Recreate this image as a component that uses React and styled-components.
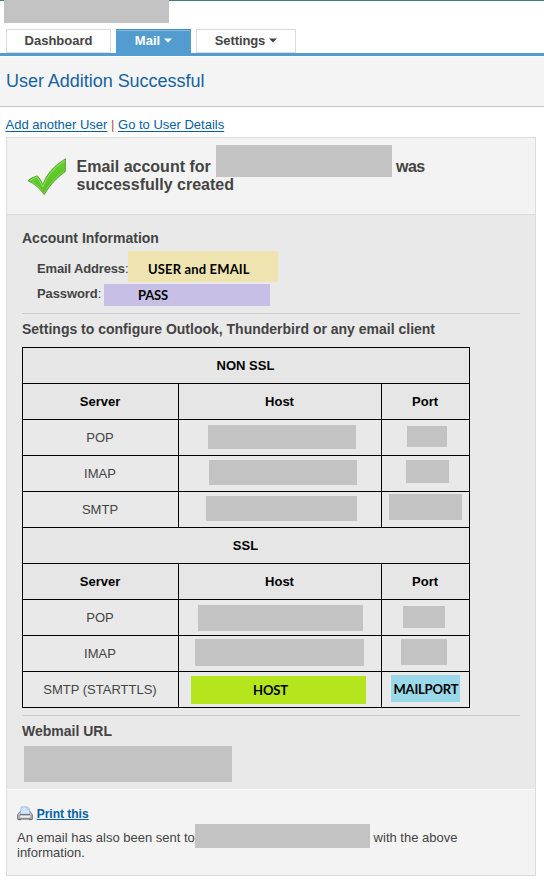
import React from "react";
import styled, { createGlobalStyle } from "styled-components";

const GlobalStyle = createGlobalStyle`
  * { box-sizing: border-box; }
  body {
    margin: 0;
    background: #fff;
    color: #444;
    font: 13px/15px "Liberation Sans", Arial, sans-serif;
  }
`;

const Page = styled.div`
  display: flex;
  flex-direction: column;
  width: 544px;
  height: 881px;
  overflow: hidden;
`;

const TopBar = styled.header`
  height: 29px;
  border-top: 1px solid #3f7d86;
  padding-left: 4px;
`;

const Block = styled.div`
  flex: none;
  width: ${(p) => p.$w}px;
  height: ${(p) => p.$h}px;
  margin: ${(p) => p.$t || 0}px 0 0 ${(p) => p.$l || 0}px;
  background: ${(p) => p.$color || "#c3c3c3"};
`;

const Marker = styled(Block)`
  display: flex;
  align-items: center;
  padding: ${(p) => p.$drop || 0}px 0 0 ${(p) => p.$pad}px;
  color: #000;
  font: bold 13px/16px Lato, Carlito, sans-serif;
  letter-spacing: ${(p) => p.$track || 0}px;
  white-space: nowrap;
`;

const Tabs = styled.nav`
  display: flex;
  gap: 5px;
  height: 27px;
  padding-left: 6px;
  border-bottom: 3px solid #529ccf;
`;

const Tab = styled.a`
  display: flex;
  align-items: center;
  justify-content: center;
  gap: 4px;
  width: ${(p) => p.$w}px;
  height: 24px;
  padding-bottom: 1px;
  border: 1px solid ${(p) => (p.$active ? "#529ccf" : "#dcdcdc")};
  border-top-color: ${(p) => (p.$active ? "#4788b5" : "#dcdcdc")};
  box-shadow: ${(p) => (p.$active ? "inset 0 1px #86bce0" : "none")};
  background: ${(p) => (p.$active ? "#529ccf" : "#fff")};
  color: ${(p) => (p.$active ? "#fff" : "#444")};
  font-weight: bold;
  letter-spacing: ${(p) => p.$track || 0}px;
`;

const TitleBar = styled.div`
  display: flex;
  align-items: center;
  height: 50px;
  margin-top: 1px;
  padding: 0 0 2px 6px;
  border-bottom: 1px solid #c6c6c6;
  background: #f4f4f4;
`;

const Title = styled.h1`
  margin: 0;
  color: #1562a2;
  font-size: 18px;
  font-weight: normal;
  line-height: 20px;
  letter-spacing: -0.03px;
`;

const Links = styled.div`
  height: 30px;
  padding: 10px 0 0 5.5px;
  color: #a55;
`;

const Link = styled.a`
  color: #0560a6;
  font-weight: ${(p) => (p.$bold ? "bold" : "normal")};
  font-size: ${(p) => (p.$bold ? 12 : 13)}px;
  text-decoration: underline;
  text-underline-offset: ${(p) => (p.$bold ? 1 : 2)}px;
`;

const Panel = styled.main`
  display: flex;
  flex-direction: column;
  width: 530px;
  height: 739px;
  margin-left: 6px;
  border: 1px solid #dcdcdc;
  background: #e9e9e9;
`;

const Banner = styled.section`
  display: flex;
  height: 77px;
  padding: 20px 0 0 20px;
  border-bottom: 1px solid #dcdcdc;
  background: #f3f3f3;
`;

const Message = styled.div`
  margin-left: 9.5px;
  font-size: 16px;
  font-weight: bold;
  line-height: 18px;
`;

const Line = styled.div`
  display: flex;
  align-items: flex-start;
  height: ${(p) => p.$h}px;
  white-space: pre;
`;

const Words = styled.span`
  flex: none;
  width: ${(p) => p.$w}px;
  letter-spacing: ${(p) => p.$track || 0}px;
`;

const Body = styled.section`
  height: 574px;
  padding: 15px 15px 0;
`;

const Heading = styled.h2`
  margin: 0;
  font-size: 14px;
  line-height: 16px;
  letter-spacing: ${(p) => p.$track || 0}px;
`;

const Account = styled.div`
  padding: 15px 0 0 15px;
  height: 67px;
`;

const Section = styled.div`
  width: 498px;
  height: ${(p) => p.$h}px;
  padding-top: 7px;
  border-top: 1px solid #cdcdcd;
`;

const Table = styled.table`
  width: 448px;
  margin-top: 10px;
  border-spacing: 1px;
  background: #000;
  table-layout: fixed;
`;

const HeadCell = styled.th`
  height: 35px;
  padding: 0 1px 0 0;
  background: #e6e6e6;
  color: #000;
`;

const Cell = styled.td`
  height: 35px;
  padding: 0 ${(p) => (p.$top ? 0 : 1)}px 0 0;
  background: #e9e9e9;
  text-align: center;
  vertical-align: ${(p) => (p.$top ? "top" : "middle")};
`;

const Footer = styled.footer`
  flex: 1;
  padding: 16px 0 0 10px;
  border-top: 1px solid #fff;
  background: #f3f3f3;
`;

const Caret = () => (
  <svg width="8" height="5" viewBox="0 0 8 5">
    <path d="M0 .5h8L4 4.5z" fill="currentColor" />
  </svg>
);

const CheckMark = () => (
  <svg width="40" height="38" viewBox="0 0 40 38">
    <defs>
      <linearGradient id="leaf" x1="0" y1="0" x2="0.4" y2="1">
        <stop offset="0" stopColor="#8be05a" />
        <stop offset="0.5" stopColor="#63cb2c" />
        <stop offset="1" stopColor="#58bd27" />
      </linearGradient>
    </defs>
    <path
      d="M1 22.6Q4.5 19.5 10.2 17.8Q13.6 21 15.8 26.8Q20.5 11.5 38.5.8L38.3 13.6Q25 23 17.2 36.5Q11 27.5 1 22.6Z"
      fill="url(#leaf)"
      stroke="#4fa32d"
      strokeWidth=".9"
    />
    <path d="M3.2 22.4Q6 20.3 9.9 19Q13.2 22.6 15.8 29Q21.5 13 37.5 2.6" fill="none" stroke="#a5e97c" strokeWidth=".8" />
    <path d="M37.4 13Q24.5 22 17.1 34.8Q12.5 28.5 5 23.8" fill="none" stroke="#86da50" strokeWidth=".7" />
  </svg>
);

const Printer = () => (
  <svg width="16" height="15" viewBox="0 0 16 15">
    <path d="M3 5.5h10l2.5 3.5v4.2h-15V9z" fill="#cfcfd4" stroke="#77777d" strokeWidth=".9" />
    <path d="M4.4.9h6.2l1.7 2 .6 5.4H3z" fill="#d3e6fb" stroke="#8eb2de" strokeWidth=".8" />
    <path d="M10 1v2.2h2.2" fill="#fff" stroke="#7aa5dc" strokeWidth=".7" />
    <path d="M2.8 8.9h10.4" stroke="#44444a" />
    <path d="M3.2 9.5h9.6v2.3H3.2z" fill="#efeff2" />
    <path d="M2.4 12.3h11.2" stroke="#8a8a90" />
    <path d="M1.8 9v3.6M14.2 9v3.6" stroke="#98989e" strokeWidth="1.2" />
    <path d="M1 13.6h3M12 13.6h3" stroke="#66666c" />
  </svg>
);

const groups = [
  {
    name: "NON SSL",
    rows: [
      ["POP", { w: 148, h: 24, l: 29, t: 5 }, { w: 40, h: 21, l: 25, t: 6 }],
      ["IMAP", { w: 148, h: 25, l: 30, t: 4 }, { w: 43, h: 23, l: 24, t: 4 }],
      ["SMTP", { w: 151, h: 25, l: 27, t: 4 }, { w: 73, h: 26, l: 7, t: 2 }],
    ],
  },
  {
    name: "SSL",
    rows: [
      ["POP", { w: 165, h: 26, l: 19, t: 5 }, { w: 42, h: 22, l: 21, t: 6 }],
      ["IMAP", { w: 169, h: 27, l: 16, t: 3 }, { w: 46, h: 26, l: 19, t: 3 }],
      [
        "SMTP (STARTTLS)",
        { w: 175, h: 28, l: 12, t: 4, color: "#b5e61d", text: "HOST", pad: 62, track: -0.1 },
        { w: 69, h: 27, l: 9, t: 3, color: "#99d9ea", text: "MAILPORT", pad: 2.5, track: -0.2 },
      ],
    ],
  },
];

const Value = ({ w, h, l, t, color, text, pad, track }) =>
  text ? (
    <Marker $w={w} $h={h} $l={l} $t={t} $color={color} $pad={pad} $track={track}>{text}</Marker>
  ) : (
    <Block $w={w} $h={h} $l={l} $t={t} />
  );

const ServerTable = () => (
  <Table>
    <colgroup>
      <col width="155" />
      <col width="202" />
      <col width="87" />
    </colgroup>
    <tbody>
      {groups.map((g) => (
        <React.Fragment key={g.name}>
          <tr><HeadCell colSpan={3}>{g.name}</HeadCell></tr>
          <tr>
            <HeadCell>Server</HeadCell>
            <HeadCell>Host</HeadCell>
            <HeadCell>Port</HeadCell>
          </tr>
          {g.rows.map(([name, host, port]) => (
            <tr key={name}>
              <Cell>{name}</Cell>
              <Cell $top><Value {...host} /></Cell>
              <Cell $top><Value {...port} /></Cell>
            </tr>
          ))}
        </React.Fragment>
      ))}
    </tbody>
  </Table>
);

export default function App() {
  return (
    <Page>
      <GlobalStyle />
      <TopBar><Block $w={165} $h={23} $t={-1} /></TopBar>
      <Tabs>
        <Tab $w={105}>Dashboard</Tab>
        <Tab $w={75} $active>Mail <Caret /></Tab>
        <Tab $w={100} $track={-0.1}>Settings <Caret /></Tab>
      </Tabs>
      <TitleBar><Title>User Addition Successful</Title></TitleBar>
      <Links><Link>Add another User</Link> | <Link>Go to User Details</Link></Links>
      <Panel>
        <Banner>
          <CheckMark />
          <Message>
            <Line $h={18}>
              <Words $w={139.5}>Email account for</Words>
              <Block $w={176} $h={32} $t={-13} />
              <Words $w={40} $track={-0.5}> was</Words>
            </Line>
            <Line $h={18}>successfully created</Line>
          </Message>
        </Banner>
        <Body>
          <Heading>Account Information</Heading>
          <Account>
            <Line $h={25}>
              <Words $w={91} $track={-0.15}><b>Email Address</b>:</Words>
              <Marker $w={150} $h={31} $t={-10} $color="#efe4b0" $pad={20} $drop={4} $track={0.15}>USER and EMAIL</Marker>
            </Line>
            <Line $h={25}>
              <Words $w={67} $track={-0.1}><b>Password</b>:</Words>
              <Marker $w={166} $h={22} $t={-2} $color="#c8bfe7" $pad={34} $track={-0.2}>PASS</Marker>
            </Line>
          </Account>
          <Section $h={402}>
            <Heading>Settings to configure Outlook, Thunderbird or any email client</Heading>
            <ServerTable />
          </Section>
          <Section $h={70}>
            <Heading>Webmail URL</Heading>
            <Block $w={208} $h={36} $l={2} $t={7} />
          </Section>
        </Body>
        <Footer>
          <Line $h={24}>
            <Printer />
            <Words $w={60}> <Link $bold>Print this</Link></Words>
          </Line>
          <Line $h={15}>
            <Words $w={178}>An email has also been sent to</Words>
            <Block $w={175} $h={24} $t={-6} />
            <Words $w={100}> with the above</Words>
          </Line>
          <Line $h={15}>information.</Line>
        </Footer>
      </Panel>
    </Page>
  );
}
